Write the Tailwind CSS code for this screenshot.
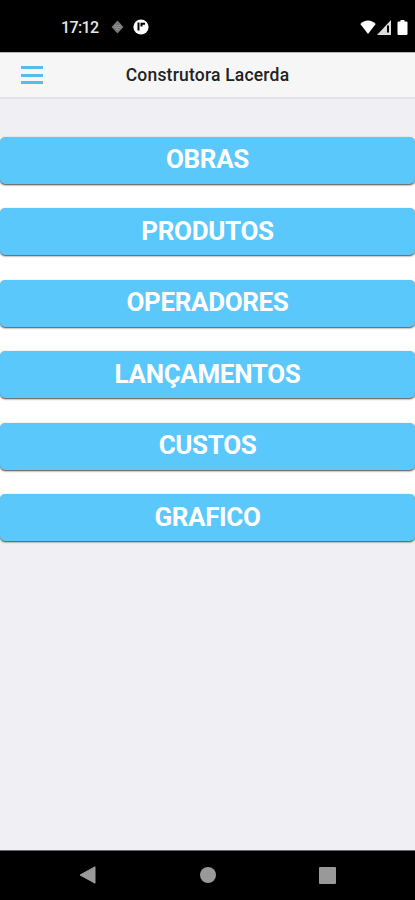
<!DOCTYPE html>
<html lang="pt-BR">
<head>
    <meta charset="UTF-8">
    <meta name="viewport" content="width=device-width, initial-scale=1.0">
    <title>Construtora Lacerda</title>
    <script src="https://cdn.jsdelivr.net/npm/@tailwindcss/browser@4"></script>
</head>
<body class="h-screen flex flex-col overflow-hidden bg-[#efeff4] font-['Roboto',sans-serif]">
    <!-- Status bar -->
    <div class="h-[52px] shrink-0 bg-black text-white flex items-center justify-between pl-[61px] pr-[7px] pt-[2px]">
        <div class="flex items-center">
            <span class="w-[38px] pt-[2px] text-[16px] leading-none font-medium tracking-[-0.6px] whitespace-nowrap text-[#e8e8e8]">17:12</span>
            <svg class="ml-[12px] w-[13px] h-[14px]" viewBox="0 0 13 14">
                <path d="M6.5 .5 12.5 7l-6 6.5L.5 7z" fill="#777"/>
                <path d="M3.5 5.5h6M3 7.5h7M5 9.5h3" stroke="#999" stroke-width=".8"/>
            </svg>
            <svg class="ml-[9px] w-[16px] h-[16px]" viewBox="0 0 16 16">
                <circle cx="8" cy="8" r="7.6" fill="#fff"/>
                <path d="M5.5 3.5v8" fill="none" stroke="#000" stroke-width="2"/>
                <path d="M8.5 7.5V4.8h3.5" fill="none" stroke="#000" stroke-width="2"/>
            </svg>
        </div>
        <div class="flex items-center">
            <svg class="w-[16px] h-[14px]" viewBox="0 0 16 14">
                <path d="M8 14 .3 4Q3.5 .5 8 .5T15.7 4z" fill="#fff"/>
            </svg>
            <svg class="ml-[1px] w-[14px] h-[15px]" viewBox="0 0 14 15">
                <path d="M14 0v15H0z" fill="#ddd"/>
                <path d="M11 5.5v7" stroke="#000" stroke-width="2"/>
            </svg>
            <svg class="ml-[6px] w-[11px] h-[15px]" viewBox="0 0 11 15">
                <path d="M3.5 0h4v1.5H9.5q1 0 1 1V14q0 1-1 1h-8q-1 0-1-1V2.5q0-1 1-1h2z" fill="#fff"/>
            </svg>
        </div>
    </div>

    <!-- Header -->
    <header class="h-[47px] shrink-0 bg-[#f6f6f6] border-t border-b-2 border-t-[#b5b5b5] border-b-[#e3e3e5] grid grid-cols-[1fr_auto_1fr] items-center">
        <button class="ml-[21px] w-[22px] flex flex-col gap-[4.5px]">
            <span class="h-[3px] w-full bg-[#54bdec]"></span>
            <span class="h-[3px] w-full bg-[#54bdec]"></span>
            <span class="h-[3px] w-full bg-[#54bdec]"></span>
        </button>
        <h1 class="pt-[2px] text-[17.5px] leading-none font-medium tracking-[0.2px] text-[#222]">Construtora Lacerda</h1>
    </header>

    <!-- Menu -->
    <main class="flex-1 pt-[37.5px]">
        <nav class="bg-white flex flex-col gap-[24.6px] text-white text-[26px] font-bold tracking-[-0.35px]">
            <button class="h-[47px] pb-[1px] rounded-[5px] bg-[#5ac8fa] shadow-[0_1px_2px_rgba(0,0,0,0.75)]">OBRAS</button>
            <button class="h-[47px] pb-[1px] rounded-[5px] bg-[#5ac8fa] shadow-[0_1px_2px_rgba(0,0,0,0.75)]">PRODUTOS</button>
            <button class="h-[47px] pb-[1px] rounded-[5px] bg-[#5ac8fa] shadow-[0_1px_2px_rgba(0,0,0,0.75)]">OPERADORES</button>
            <button class="h-[47px] pb-[1px] rounded-[5px] bg-[#5ac8fa] shadow-[0_1px_2px_rgba(0,0,0,0.75)]">LANÇAMENTOS</button>
            <button class="h-[47px] pb-[1px] rounded-[5px] bg-[#5ac8fa] shadow-[0_1px_2px_rgba(0,0,0,0.75)]">CUSTOS</button>
            <button class="h-[47px] pb-[1px] rounded-[5px] bg-[#5ac8fa] shadow-[0_1px_2px_rgba(0,0,0,0.75)]">GRAFICO</button>
        </nav>
    </main>

    <!-- Android navigation -->
    <div class="h-[50px] shrink-0 bg-black border-t border-[#666] flex items-center justify-between pl-[79px] pr-[79px] pb-[1px]">
        <svg class="w-[17px] h-[18px]" viewBox="0 0 17 18">
            <path d="M16 .8v16.4L1 9z" fill="#999" stroke="#999" stroke-linejoin="round"/>
        </svg>
        <span class="w-[16px] h-[16px] rounded-full bg-[#999]"></span>
        <span class="w-[17px] h-[17px] rounded-[1px] bg-[#999]"></span>
    </div>
</body>
</html>
